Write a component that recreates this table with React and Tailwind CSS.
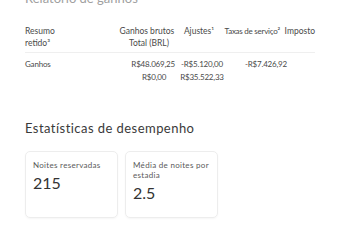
export default function App() {
  return (
    <div className="w-[340px] h-[250px] overflow-hidden bg-white px-[25px] font-['Lato',sans-serif]">
      <h1 className="mt-[-10px] h-[16px] text-[13px] leading-[16px] text-[#a0a0a0]">Relatório de ganhos</h1>

      {/* Resumo table */}
      <div className="mt-[19px] w-[290px] whitespace-nowrap text-[#4a4a4a]">
        <div className="border-b border-[#efefef] pb-[3px] text-[8.5px]">
          <div className="flex h-[12px] leading-[12px]">
            <div className="w-[95px]">Resumo</div>
            <div className="w-[58px] text-center">Ganhos brutos</div>
            <div className="w-[48px] text-center">Ajustes¹</div>
            <div className="w-[61px] pl-[2px] text-[8px] tracking-[-0.25px]">Taxas de serviço²</div>
            <div className="pl-[2px]">Imposto</div>
          </div>
          <div className="flex h-[12px] leading-[12px]">
            <div className="w-[95px]">retido³</div>
            <div className="w-[58px] text-center">Total (BRL)</div>
          </div>
        </div>
        <div className="pt-[5px] text-[8px] tracking-[-0.2px]">
          <div className="flex h-[13px] leading-[13px]">
            <div className="w-[95px]">Ganhos</div>
            <div className="w-[58px] text-right pr-[3px]">R$48.069,25</div>
            <div className="w-[48px] text-center">-R$5.120,00</div>
            <div className="w-[61px] text-right">-R$7.426,92</div>
          </div>
          <div className="flex h-[13px] leading-[13px]">
            <div className="w-[95px]"></div>
            <div className="w-[58px] pl-[22px]">R$0,00</div>
            <div className="w-[48px] text-center">R$35.522,33</div>
          </div>
        </div>
      </div>

      <h2 className="mt-[36px] h-[16px] text-[13px] leading-[16px] tracking-[0.45px] text-[#3a3a3a]">Estatísticas de desempenho</h2>

      <div className="mt-[15px] flex gap-[7px]">
        <div className="w-[93px] h-[67px] rounded-[5px] border border-[#ededed] shadow-[0_1px_2px_rgba(0,0,0,0.04)] pl-[7px] pr-[3px] pt-[8px]">
          <p className="text-[8px] leading-[10px] tracking-[0.3px] text-[#5a5a5a]">Noites reservadas</p>
          <p className="mt-[3px] text-[16px] leading-[20px] text-[#333]">215</p>
        </div>
        <div className="w-[93px] h-[67px] rounded-[5px] border border-[#ededed] shadow-[0_1px_2px_rgba(0,0,0,0.04)] pl-[7px] pr-[3px] pt-[8px]">
          <p className="text-[8px] leading-[10px] tracking-[0.3px] text-[#5a5a5a]">Média de noites por estadia</p>
          <p className="mt-[3px] text-[16px] leading-[20px] text-[#333]">2.5</p>
        </div>
      </div>
    </div>
  );
}
